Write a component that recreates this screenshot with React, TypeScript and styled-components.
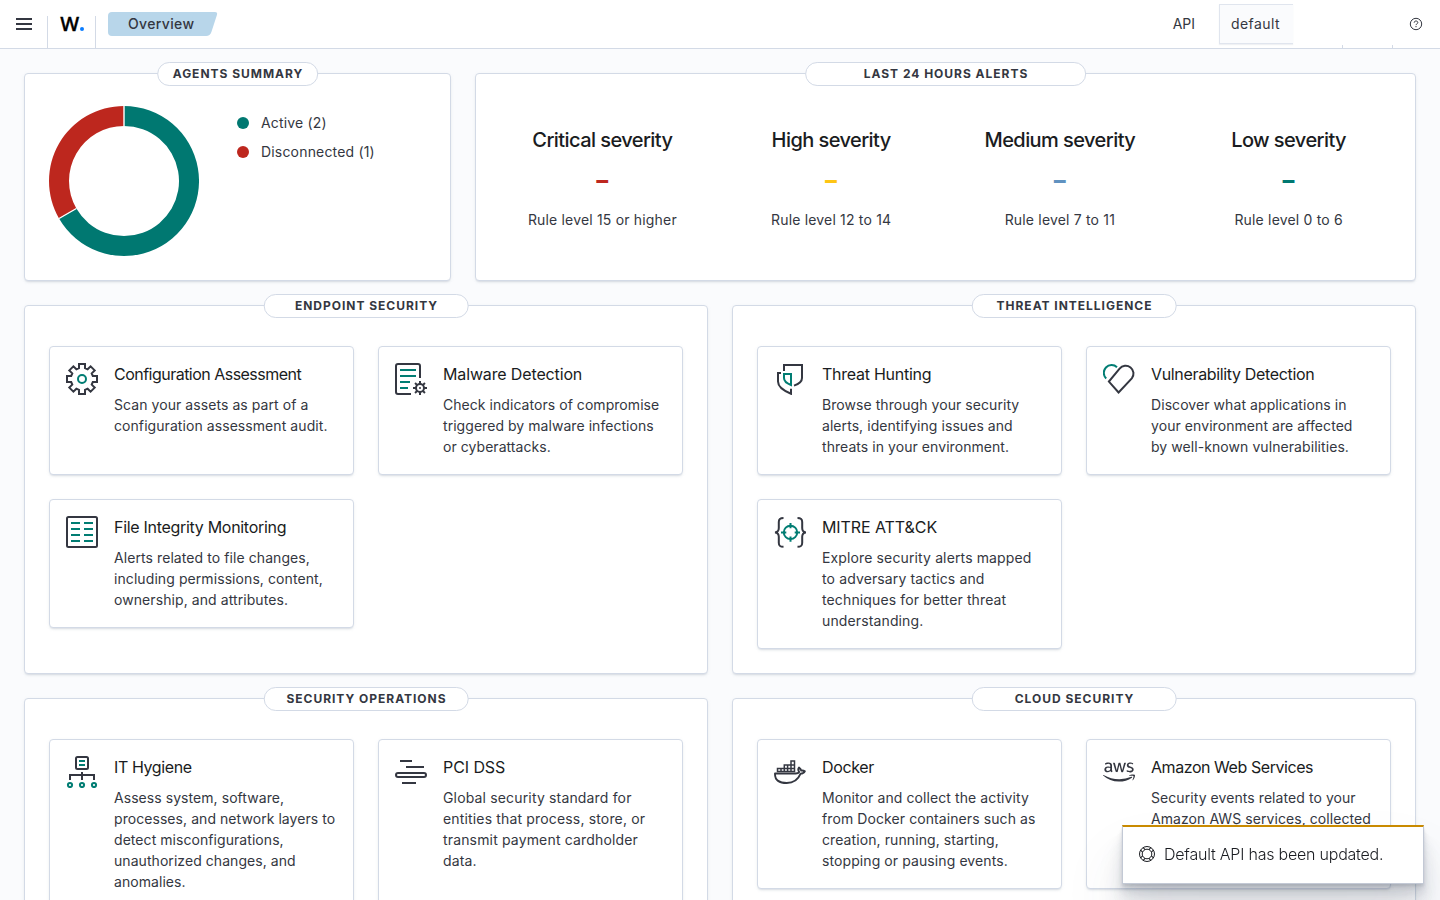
import React from "react";
import styled, { createGlobalStyle } from "styled-components";
import { FaAws } from "react-icons/fa";

const GlobalStyle = createGlobalStyle`
  *, *::before, *::after { box-sizing: border-box; }
  html, body { margin: 0; height: 100%; }
  body {
    overflow: hidden;
    background: #fafbfd;
    color: #343741;
    font-family: Inter, "Liberation Sans", sans-serif;
    font-size: 14px;
    line-height: 1.5;
    letter-spacing: 0.18px;
    font-kerning: normal;
  }
  h1, h2, h3, p, ul { margin: 0; padding: 0; }
`;

const teal = "#017d73";
const ink = "#343741";
const border = "#d3dae6";

const Page = styled.div`
  height: 100vh;
  overflow: hidden;
`;

const Header = styled.header`
  display: flex;
  align-items: stretch;
  height: 49px;
  background: #fff;
  border-bottom: 1px solid ${border};
`;

const MenuButton = styled.button`
  display: flex;
  align-items: center;
  justify-content: center;
  width: 48px;
  padding: 0;
  border: 0;
  background: none;
`;

const LogoLink = styled.a`
  display: flex;
  align-items: flex-end;
  justify-content: center;
  width: 49px;
  height: 32px;
  margin: 16px 0 0 -1px;
  padding: 0 0 17px 1px;
  border: solid ${border};
  border-width: 0 1px;
`;

const LogoLetter = styled.span`
  color: #000;
  font-family: "Open Sans", Inter, sans-serif;
  font-size: 20px;
  font-weight: 600;
  line-height: 14px;
  letter-spacing: 0.4px;
  -webkit-text-stroke: 0.3px #000;
`;

const LogoDot = styled.i`
  width: 4px;
  height: 4px;
  border-radius: 50%;
  background: #0a7cff;
`;

const Breadcrumb = styled.div`
  position: relative;
  isolation: isolate;
  align-self: center;
  width: 110px;
  height: 24px;
  margin-left: 12px;
  padding-left: 20px;
  color: ${ink};
  font-weight: 500;
  line-height: 24px;
  letter-spacing: 0.36px;

  &::before,
  &::after {
    content: "";
    position: absolute;
    z-index: -1;
    top: 0;
    bottom: 0;
    background: #b8d6ea;
  }
  &::before {
    left: 0;
    right: 12px;
    border-radius: 4px 0 0 4px;
  }
  &::after {
    right: 4px;
    width: 24px;
    border-radius: 0 3px 4px 0;
    transform: skewX(-18deg);
  }
`;

const HeaderTools = styled.div`
  display: flex;
  margin-left: auto;
`;

const ApiLabel = styled.span`
  align-self: center;
  margin-right: 24px;
  padding-bottom: 1px;
  letter-spacing: 0;
`;

const ApiSelect = styled.div`
  width: 74px;
  height: 40px;
  margin-top: 4px;
  padding-left: 11px;
  border: 1px solid #e0e5ee;
  border-right: 0;
  background: #fafbfd;
  box-shadow: 0 1px 1px rgba(152, 162, 179, 0.15);
  line-height: 38px;
  letter-spacing: 0.42px;
`;

const ToolSlot = styled.div<{ $width: number; $divided?: boolean }>`
  display: flex;
  align-items: center;
  justify-content: center;
  width: ${(p) => p.$width}px;
  height: 48px;
  background: ${(p) =>
    p.$divided
      ? `linear-gradient(${border}, ${border}) right bottom / 1px 3px no-repeat`
      : "none"};
`;

const HelpSlot = styled(ToolSlot)`
  padding-right: 1px;
`;

const Content = styled.main`
  display: grid;
  gap: 24px;
  padding: 24px;
`;

const Row = styled.div<{ $columns: string }>`
  display: grid;
  grid-template-columns: ${(p) => p.$columns};
  gap: 24px;
`;

const Panel = styled.section<{ $padding?: string }>`
  position: relative;
  padding: ${(p) => p.$padding ?? "40px 24px 24px"};
  border: 1px solid ${border};
  border-radius: 4px;
  background: #fff;
  box-shadow: 0 2px 2px -1px rgba(152, 162, 179, 0.3), 0 1px 5px -2px rgba(152, 162, 179, 0.3);
`;

const PanelLegend = styled.h2`
  position: absolute;
  top: -12px;
  left: 50%;
  min-width: 30%;
  height: 24px;
  padding: 0 14px 0 15px;
  border: 1px solid ${border};
  border-radius: 12px;
  background: #fff;
  color: ${ink};
  font-size: 12px;
  font-weight: 700;
  line-height: 22px;
  letter-spacing: 0.98px;
  text-align: center;
  text-transform: uppercase;
  white-space: nowrap;
  transform: translateX(-50%);
`;

const AgentsBody = styled.div`
  display: flex;
  gap: 38px;
`;

const LegendList = styled.ul`
  display: grid;
  align-content: start;
  gap: 8px;
  margin-top: 6px;
  list-style: none;
`;

const LegendItem = styled.li`
  display: flex;
  align-items: center;
  gap: 12px;
`;

const LegendDot = styled.i<{ $color: string }>`
  width: 12px;
  height: 12px;
  border-radius: 50%;
  background: ${(p) => p.$color};
`;

const Stats = styled.div`
  display: grid;
  grid-template-columns: repeat(4, 1fr);
  text-align: center;
`;

const Stat = styled.div`
  display: flex;
  flex-direction: column;
`;

const StatTitle = styled.h3`
  color: #1a1c21;
  font-size: 20px;
  font-weight: 500;
  line-height: 32px;
  letter-spacing: -0.57px;
`;

const StatValue = styled.span<{ $color: string }>`
  color: ${(p) => p.$color};
  font-size: 37px;
  font-weight: 400;
  line-height: 32px;
  letter-spacing: 0;
  margin-top: 8px;
`;

const StatNote = styled.p`
  margin-top: 13px;
`;

const CardGrid = styled.div`
  display: grid;
  grid-template-columns: repeat(2, 1fr);
  grid-auto-rows: min-content;
  gap: 24px;
`;

const CardBox = styled.article`
  display: flex;
  gap: 16px;
  padding: 16px;
  border: 1px solid ${border};
  border-radius: 4px;
  background: #fff;
  box-shadow: 0 2px 2px -1px rgba(152, 162, 179, 0.3), 0 1px 5px -2px rgba(152, 162, 179, 0.3);
`;

const CardIcon = styled.span`
  flex: none;
  width: 32px;
  height: 32px;
  color: ${ink};

  svg {
    display: block;
    width: 32px;
    height: 32px;
  }
`;

const CardBody = styled.div`
  margin: -1px 0 1px;
`;

const CardTitle = styled.h3<{ $tracking: number }>`
  margin-bottom: 8px;
  color: #1a1c21;
  font-size: 16px;
  font-weight: 400;
  line-height: 24px;
  letter-spacing: ${(p) => p.$tracking}px;
`;

const CardText = styled.p<{ $tracking: number }>`
  letter-spacing: ${(p) => p.$tracking}px;
  white-space: pre;
`;

const Toast = styled.aside`
  position: fixed;
  right: 16px;
  bottom: 16px;
  display: flex;
  align-items: center;
  gap: 9px;
  width: 302px;
  height: 59px;
  padding: 0 16px 2px;
  border: 1px solid #c3c9d5;
  border-top: 2px solid #c98a00;
  background: #fff;
  box-shadow: 0 40px 64px 0 rgba(65, 78, 101, 0.1), 0 24px 32px 0 rgba(65, 78, 101, 0.1),
    0 16px 16px 0 rgba(65, 78, 101, 0.1), 0 8px 8px 0 rgba(65, 78, 101, 0.1),
    0 4px 4px 0 rgba(65, 78, 101, 0.1), 0 2px 2px 0 rgba(65, 78, 101, 0.1);
  color: #1a1c21;
`;

const ToastText = styled.span`
  font-size: 16px;
  font-weight: 300;
  line-height: 24px;
  letter-spacing: -0.22px;
`;

const Svg = ({ children }: { children: React.ReactNode }) => (
  <svg viewBox="0 0 32 32" fill="none" stroke={ink} strokeWidth="2">
    {children}
  </svg>
);

const GearIcon = () => (
  <Svg>
    <path d="M13 1h6v4.2l2.6 1.1 3-3 4.1 4.1-3 3 1.1 2.6H31v6h-4.2l-1.1 2.6 3 3-4.1 4.1-3-3-2.6 1.1V31h-6v-4.2l-2.6-1.1-3 3-4.1-4.1 3-3L5.200 19H1v-6h4.200l1.100-2.600-3-3 4.100-4.100 3 3 2.600-1.100z" />
    <circle cx="16" cy="16" r="4" stroke={teal} />
  </Svg>
);

const DocumentGearIcon = () => (
  <Svg>
    <path d="M25 15V3a2 2 0 0 0-2-2H3a2 2 0 0 0-2 2v26a2 2 0 0 0 2 2h13" />
    <path d="M5 7h16M5 13h16M5 19h10M5 25h8" stroke={teal} />
    <circle cx="25" cy="25" r="4" />
    <path d="M25 18v3M25 29v3M18 25h3M29 25h3M20.050 20.050l2.100 2.100M27.850 27.850l2.100 2.100M29.950 20.050l-2.100 2.100M22.150 27.850l-2.100 2.100" />
    <circle cx="25" cy="25" r="1" fill={ink} stroke="none" />
  </Svg>
);

const ShieldsIcon = () => (
  <Svg>
    <path d="M10 8V2h18v13c0 3.500-3 6-8 7.600" />
    <path d="M7 10H4v8.500c0 5 5 9 13 12.200v-5" />
    <path d="M10 11h7v11c-4-1.500-7-3.800-7-7z" stroke={teal} />
  </Svg>
);

const HeartIcon = () => (
  <Svg>
    <path d="M3.200 15.500A7.600 7.600 0 0 1 14 4.200" stroke={teal} />
    <path d="M15.600 29.500 5.900 18.600 16.600 5.700a7.700 7.700 0 0 1 12.200 9.700z" />
  </Svg>
);

const ColumnsIcon = () => (
  <Svg>
    <rect x="1" y="1" width="30" height="30" rx="1.500" />
    <path d="M5 7h9M5 13h9M5 19h9M5 25h9M18 7h9M18 13h9M18 19h9M18 25h9" stroke={teal} />
  </Svg>
);

const BracesIcon = () => (
  <Svg>
    <path d="M9.500 2C6 2 4.800 3 4.800 6v6c0 3-1.200 4.200-3.800 4.400 2.600.2 3.800 1.400 3.800 4.400v6c0 3 1.200 4 4.700 4M23.500 2c3.500 0 4.700 1 4.700 4v6c0 3 1.200 4.200 3.800 4.400-2.600.2-3.800 1.400-3.800 4.400v6c0 3-1.200 4-4.700 4" />
    <g stroke={teal}>
      <circle cx="16.500" cy="16.400" r="6.700" />
      <path d="M16.500 7v5.200M16.500 20.600v5.200M7 16.400h5.300M20.700 16.400H26" />
    </g>
  </Svg>
);

const NetworkIcon = () => (
  <Svg>
    <rect x="10" y="1" width="12" height="12" rx="1.500" />
    <path d="M16 16v8M4 24v-5h24v5" />
    <g stroke={teal}>
      <path d="M13 5h6M13 9h6" />
      <circle cx="4" cy="29" r="2.100" />
      <circle cx="16" cy="29" r="2.100" />
      <circle cx="28" cy="29" r="2.100" />
    </g>
  </Svg>
);

const LayersIcon = () => (
  <Svg>
    <path d="M5 5h12M11 11h18M7 27h14" />
    <rect x="1" y="17" width="30" height="4" rx="2" />
  </Svg>
);

const WhaleIcon = () => (
  <Svg>
    <g strokeWidth="1.500">
      <path d="M3.500 12.500h17v3h-17zM7 12.500v3M10.300 12.500v3M13.600 12.500v3M17 12.500v3M10.300 12.500V9h10.200v3.500M13.600 9v3.500M17 12.500V5h3.500v7.500" />
    </g>
    <path
      strokeWidth="1.900"
      strokeLinejoin="round"
      d="M1 17.500h20.700c1.800 0 3-.7 3.500-1.500-1.200-1.600-1.100-3.200-.2-4.400 1.300.8 2 1.800 2.100 2.900 1.500-.2 2.700 0 3.700.8-.8 1.600-2.200 2.300-4.200 2.300-2.700 6.500-7.200 9.400-13.900 9.400C5.500 27 .8 24.500 1 17.500z"
    />
  </Svg>
);

const HelpIcon = () => (
  <svg width="16" height="16" viewBox="0 0 16 16" fill="none" stroke={ink}>
    <circle cx="8" cy="8" r="5.700" />
    <path d="M6.200 6.700c0-1.100.7-1.700 1.800-1.700s1.800.6 1.800 1.600c0 1.300-1.800 1.200-1.800 2.500" />
    <path d="M8 10v1.200" />
  </svg>
);

const LifeRingIcon = () => (
  <svg width="16" height="16" viewBox="0 0 16 16" fill="none" stroke="#1a1c21">
    <circle cx="8" cy="8" r="7.500" />
    <circle cx="8" cy="8" r="4.800" />
    <g transform="rotate(45 8 8)">
      <path d="M6.200 .8v2.700M9.800 .8v2.700M6.200 15.200v-2.700M9.800 15.200v-2.700M.8 6.200h2.700M.8 9.800h2.700M15.200 6.200h-2.700M15.200 9.800h-2.700" />
    </g>
  </svg>
);

const MenuIcon = () => (
  <svg width="16" height="16" viewBox="0 0 16 16" fill={ink}>
    <path d="M0 2h16v2H0zM0 7h16v2H0zM0 12h16v2H0z" />
  </svg>
);

const Donut = () => (
  <svg width="150" height="150" viewBox="0 0 150 150">
    <path d="M75 0A75 75 0 1 1 10.050 112.500L27.370 102.500A55 55 0 1 0 75 20z" fill="#007871" />
    <path d="M10.050 112.500A75 75 0 0 1 75 0V20A55 55 0 0 0 27.370 102.500z" fill="#bd271e" />
    <path d="M75 0V20M10.050 112.500L27.370 102.500" stroke="#fff" strokeWidth="1.400" />
  </svg>
);

type Item = {
  title: string;
  text: string;
  icon: React.ReactNode;
  titleTracking: number;
  textTracking: number;
};

const Card = ({ title, text, icon, titleTracking, textTracking }: Item) => (
  <CardBox>
    <CardIcon>{icon}</CardIcon>
    <CardBody>
      <CardTitle $tracking={titleTracking}>{title}</CardTitle>
      <CardText $tracking={textTracking}>{text}</CardText>
    </CardBody>
  </CardBox>
);

const sections: { title: string; items: Item[] }[] = [
  {
    title: "Endpoint security",
    items: [
      {
        title: "Configuration Assessment",
        text: "Scan your assets as part of a\nconfiguration assessment audit.",
        icon: <GearIcon />,
        titleTracking: -0.52,
        textTracking: 0.07,
      },
      {
        title: "Malware Detection",
        text: "Check indicators of compromise\ntriggered by malware infections\nor cyberattacks.",
        icon: <DocumentGearIcon />,
        titleTracking: -0.14,
        textTracking: 0.05,
      },
      {
        title: "File Integrity Monitoring",
        text: "Alerts related to file changes,\nincluding permissions, content,\nownership, and attributes.",
        icon: <ColumnsIcon />,
        titleTracking: -0.3,
        textTracking: 0.08,
      },
    ],
  },
  {
    title: "Threat intelligence",
    items: [
      {
        title: "Threat Hunting",
        text: "Browse through your security\nalerts, identifying issues and\nthreats in your environment.",
        icon: <ShieldsIcon />,
        titleTracking: -0.26,
        textTracking: 0.06,
      },
      {
        title: "Vulnerability Detection",
        text: "Discover what applications in\nyour environment are affected\nby well-known vulnerabilities.",
        icon: <HeartIcon />,
        titleTracking: -0.34,
        textTracking: 0.07,
      },
      {
        title: "MITRE ATT&CK",
        text: "Explore security alerts mapped\nto adversary tactics and\ntechniques for better threat\nunderstanding.",
        icon: <BracesIcon />,
        titleTracking: -0.08,
        textTracking: 0.13,
      },
    ],
  },
  {
    title: "Security operations",
    items: [
      {
        title: "IT Hygiene",
        text: "Assess system, software,\nprocesses, and network layers to\ndetect misconfigurations,\nunauthorized changes, and\nanomalies.",
        icon: <NetworkIcon />,
        titleTracking: -0.38,
        textTracking: 0.06,
      },
      {
        title: "PCI DSS",
        text: "Global security standard for\nentities that process, store, or\ntransmit payment cardholder\ndata.",
        icon: <LayersIcon />,
        titleTracking: -0.08,
        textTracking: 0.16,
      },
    ],
  },
  {
    title: "Cloud security",
    items: [
      {
        title: "Docker",
        text: "Monitor and collect the activity\nfrom Docker containers such as\ncreation, running, starting,\nstopping or pausing events.",
        icon: <WhaleIcon />,
        titleTracking: -0.38,
        textTracking: 0.09,
      },
      {
        title: "Amazon Web Services",
        text: "Security events related to your\nAmazon AWS services, collected",
        icon: <FaAws />,
        titleTracking: -0.44,
        textTracking: 0.07,
      },
    ],
  },
];

const severities = [
  { title: "Critical severity", note: "Rule level 15 or higher", color: "#bd271e" },
  { title: "High severity", note: "Rule level 12 to 14", color: "#fec514" },
  { title: "Medium severity", note: "Rule level 7 to 11", color: "#6092c0" },
  { title: "Low severity", note: "Rule level 0 to 6", color: "#007871" },
];

const Section = ({ title, items }: { title: string; items: Item[] }) => (
  <Panel>
    <PanelLegend>{title}</PanelLegend>
    <CardGrid>
      {items.map((item) => (
        <Card key={item.title} {...item} />
      ))}
    </CardGrid>
  </Panel>
);

export default function App() {
  return (
    <Page>
      <GlobalStyle />
      <Header>
        <MenuButton aria-label="Menu">
          <MenuIcon />
        </MenuButton>
        <LogoLink>
          <LogoLetter>W</LogoLetter>
          <LogoDot />
        </LogoLink>
        <Breadcrumb>Overview</Breadcrumb>
        <HeaderTools>
          <ApiLabel>API</ApiLabel>
          <ApiSelect>default</ApiSelect>
          <ToolSlot $width={50} $divided />
          <ToolSlot $width={50} $divided />
          <HelpSlot $width={47}>
            <HelpIcon />
          </HelpSlot>
        </HeaderTools>
      </Header>
      <Content>
        <Row $columns="427px 1fr">
          <Panel $padding="32px 24px 24px">
            <PanelLegend>Agents summary</PanelLegend>
            <AgentsBody>
              <Donut />
              <LegendList>
                <LegendItem>
                  <LegendDot $color="#007871" />
                  Active (2)
                </LegendItem>
                <LegendItem>
                  <LegendDot $color="#bd271e" />
                  Disconnected (1)
                </LegendItem>
              </LegendList>
            </AgentsBody>
          </Panel>
          <Panel $padding="50px 12px 24px">
            <PanelLegend>Last 24 hours alerts</PanelLegend>
            <Stats>
              {severities.map((s) => (
                <Stat key={s.title}>
                  <StatTitle>{s.title}</StatTitle>
                  <StatValue $color={s.color}>-</StatValue>
                  <StatNote>{s.note}</StatNote>
                </Stat>
              ))}
            </Stats>
          </Panel>
        </Row>
        <Row $columns="1fr 1fr">
          {sections.map((section) => (
            <Section key={section.title} {...section} />
          ))}
        </Row>
      </Content>
      <Toast role="status">
        <LifeRingIcon />
        <ToastText>Default API has been updated.</ToastText>
      </Toast>
    </Page>
  );
}
